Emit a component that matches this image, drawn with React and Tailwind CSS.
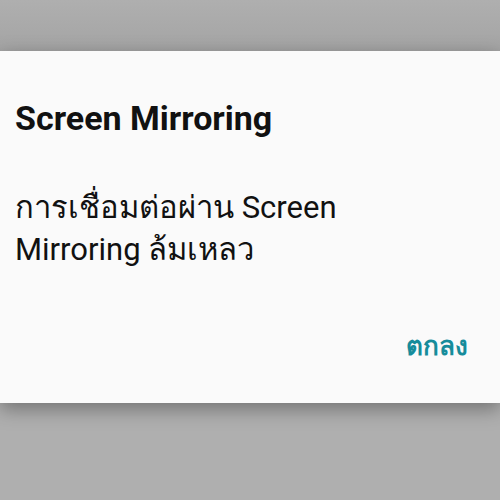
export default function App() {
  return (
    <div className="w-[500px] h-[500px] bg-[#afafaf] flex flex-col overflow-hidden font-['Roboto','Noto_Sans',sans-serif]">
      <div className="h-[51px] shrink-0 bg-gradient-to-b from-[#afafaf] to-[#a4a4a4]" />

      {/* Dialog */}
      <div className="h-[352px] shrink-0 bg-[#fafafa] shadow-[0_6px_18px_rgba(0,0,0,0.35)] flex flex-col px-[15px] pt-[48px]">
        <h1 className="text-[34px] leading-[38px] font-bold text-[#111]">Screen Mirroring</h1>
        <p className="mt-[50px] max-w-[360px] text-[31px] leading-[42px] text-[#111]">
          การเชื่อมต่อผ่าน Screen <span className="whitespace-nowrap">Mirroring ล้มเหลว</span>
        </p>
        <div className="mt-auto mb-[42px] flex justify-end pr-[17px]">
          <button className="text-[26px] leading-[30px] font-bold text-[#168c9b]">ตกลง</button>
        </div>
      </div>
    </div>
  )
}
